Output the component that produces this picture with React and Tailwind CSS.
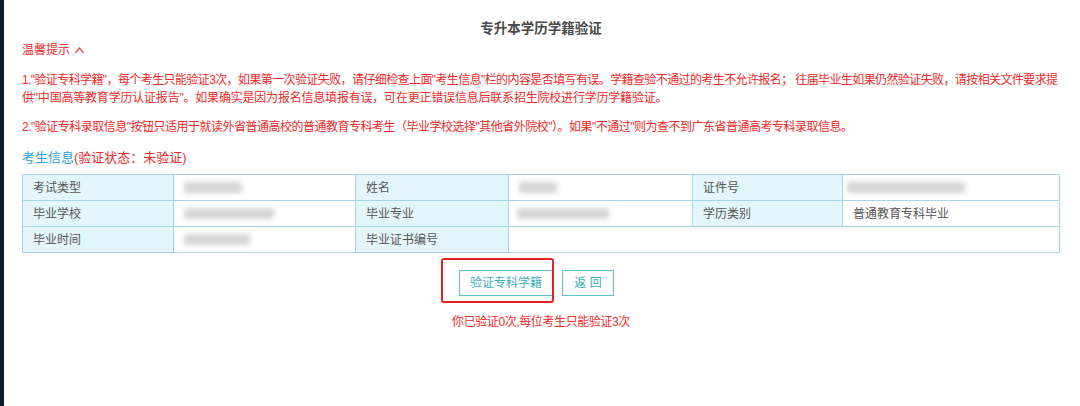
import React from "react";

const font = { fontFamily: '"Liberation Sans", "Noto Sans CJK SC", sans-serif' };

function Blur({ w, ml = 0 }) {
  return (
    <div
      className="h-[11px] rounded-[2px] bg-[#d6d6d6] blur-[2.5px]"
      style={{ width: w, marginLeft: ml }}
    />
  );
}

const label = "bg-[#e2f6fc] border border-[#a6d5e6] pl-[10px] text-[12px] text-[#555] h-[26px]";
const value = "bg-white border border-[#a6d5e6] pl-[10px] text-[12px] text-[#555] h-[26px]";

export default function App() {
  return (
    <div className="flex min-h-[406px] bg-white" style={font}>
      <div className="w-[4px] shrink-0 bg-[#0e1c24]" />
      <div className="min-w-0 flex-1 overflow-hidden pl-[18px] pr-[20px]">
        <h1 className="pt-[20px] text-center text-[13.5px] font-bold leading-[18px] text-[#4a4a4a]">
          专升本学历学籍验证
        </h1>
        <div className="mt-[3px] flex items-center gap-[5px] text-[12px] leading-[18px] text-[#ee2a2a]">
          <span>温馨提示</span>
          <svg width="9" height="7" viewBox="0 0 9 7" fill="none" stroke="#ee2a2a" strokeWidth="1.2">
            <path d="M0.5 6 L4.5 1 L8.5 6" />
          </svg>
        </div>
        <p className="mt-[12px] whitespace-nowrap text-[12px] leading-[18px] text-[#ee2a2a]">
          <span className="tracking-[-0.6px]">
            1."验证专科学籍"，每个考生只能验证3次，如果第一次验证失败，请仔细检查上面"考生信息"栏的内容是否填写有误。学籍查验不通过的考生不允许报名； 往届毕业生如果仍然验证失败，请按相关文件要求提
          </span>
          <br />
          <span className="tracking-[-0.2px]">
            供"中国高等教育学历认证报告"。如果确实是因为报名信息填报有误，可在更正错误信息后联系招生院校进行学历学籍验证。
          </span>
        </p>
        <p className="mt-[11px] whitespace-nowrap text-[12px] leading-[18px] tracking-[-0.5px] text-[#ee2a2a]">
          2."验证专科录取信息"按钮只适用于就读外省普通高校的普通教育专科考生（毕业学校选择"其他省外院校"）。如果"不通过"则为查不到广东省普通高考专科录取信息。
        </p>
        <div className="mt-[13px] text-[13px] leading-[18px]">
          <span className="text-[#2a9fd6]">考生信息</span>
          <span className="text-[#ee2a2a]">(验证状态：未验证)</span>
        </div>
        <table className="mt-[7px] w-full table-fixed border-collapse">
          <colgroup>
            <col className="w-[151px]" />
            <col className="w-[182px]" />
            <col className="w-[153px]" />
            <col className="w-[184px]" />
            <col className="w-[150px]" />
            <col />
          </colgroup>
          <tbody>
            <tr>
              <td className={label}>考试类型</td>
              <td className={value}><Blur w={58} /></td>
              <td className={label}>姓名</td>
              <td className={value}><Blur w={38} /></td>
              <td className={label}>证件号</td>
              <td className={value}><Blur w={118} ml={-6} /></td>
            </tr>
            <tr>
              <td className={label}>毕业学校</td>
              <td className={value}><Blur w={90} /></td>
              <td className={label}>毕业专业</td>
              <td className={value}><Blur w={92} ml={-2} /></td>
              <td className={label}>学历类别</td>
              <td className={value}>普通教育专科毕业</td>
            </tr>
            <tr>
              <td className={label}>毕业时间</td>
              <td className={value}><Blur w={66} /></td>
              <td className={label}>毕业证书编号</td>
              <td className={value} colSpan={3}></td>
            </tr>
          </tbody>
        </table>
        <div className="mt-[17px] flex justify-center gap-[9px] pr-[9px]">
          <div className="relative">
            <button className="h-[26px] w-[94px] border border-[#5cc3cb] bg-white text-[12px] text-[#3aaebd]">
              验证专科学籍
            </button>
            <div className="absolute left-[-18px] top-[-12px] h-[45px] w-[113px] rounded-[3px] border-2 border-[#e52020]" />
          </div>
          <button className="h-[26px] w-[52px] border border-[#5cc3cb] bg-white text-[12px] text-[#3aaebd]">
            返 回
          </button>
        </div>
        <p className="mt-[17px] text-center text-[12px] leading-[18px] tracking-[-0.4px] text-[#ee2a2a]">
          你已验证0次,每位考生只能验证3次
        </p>
      </div>
    </div>
  );
}
